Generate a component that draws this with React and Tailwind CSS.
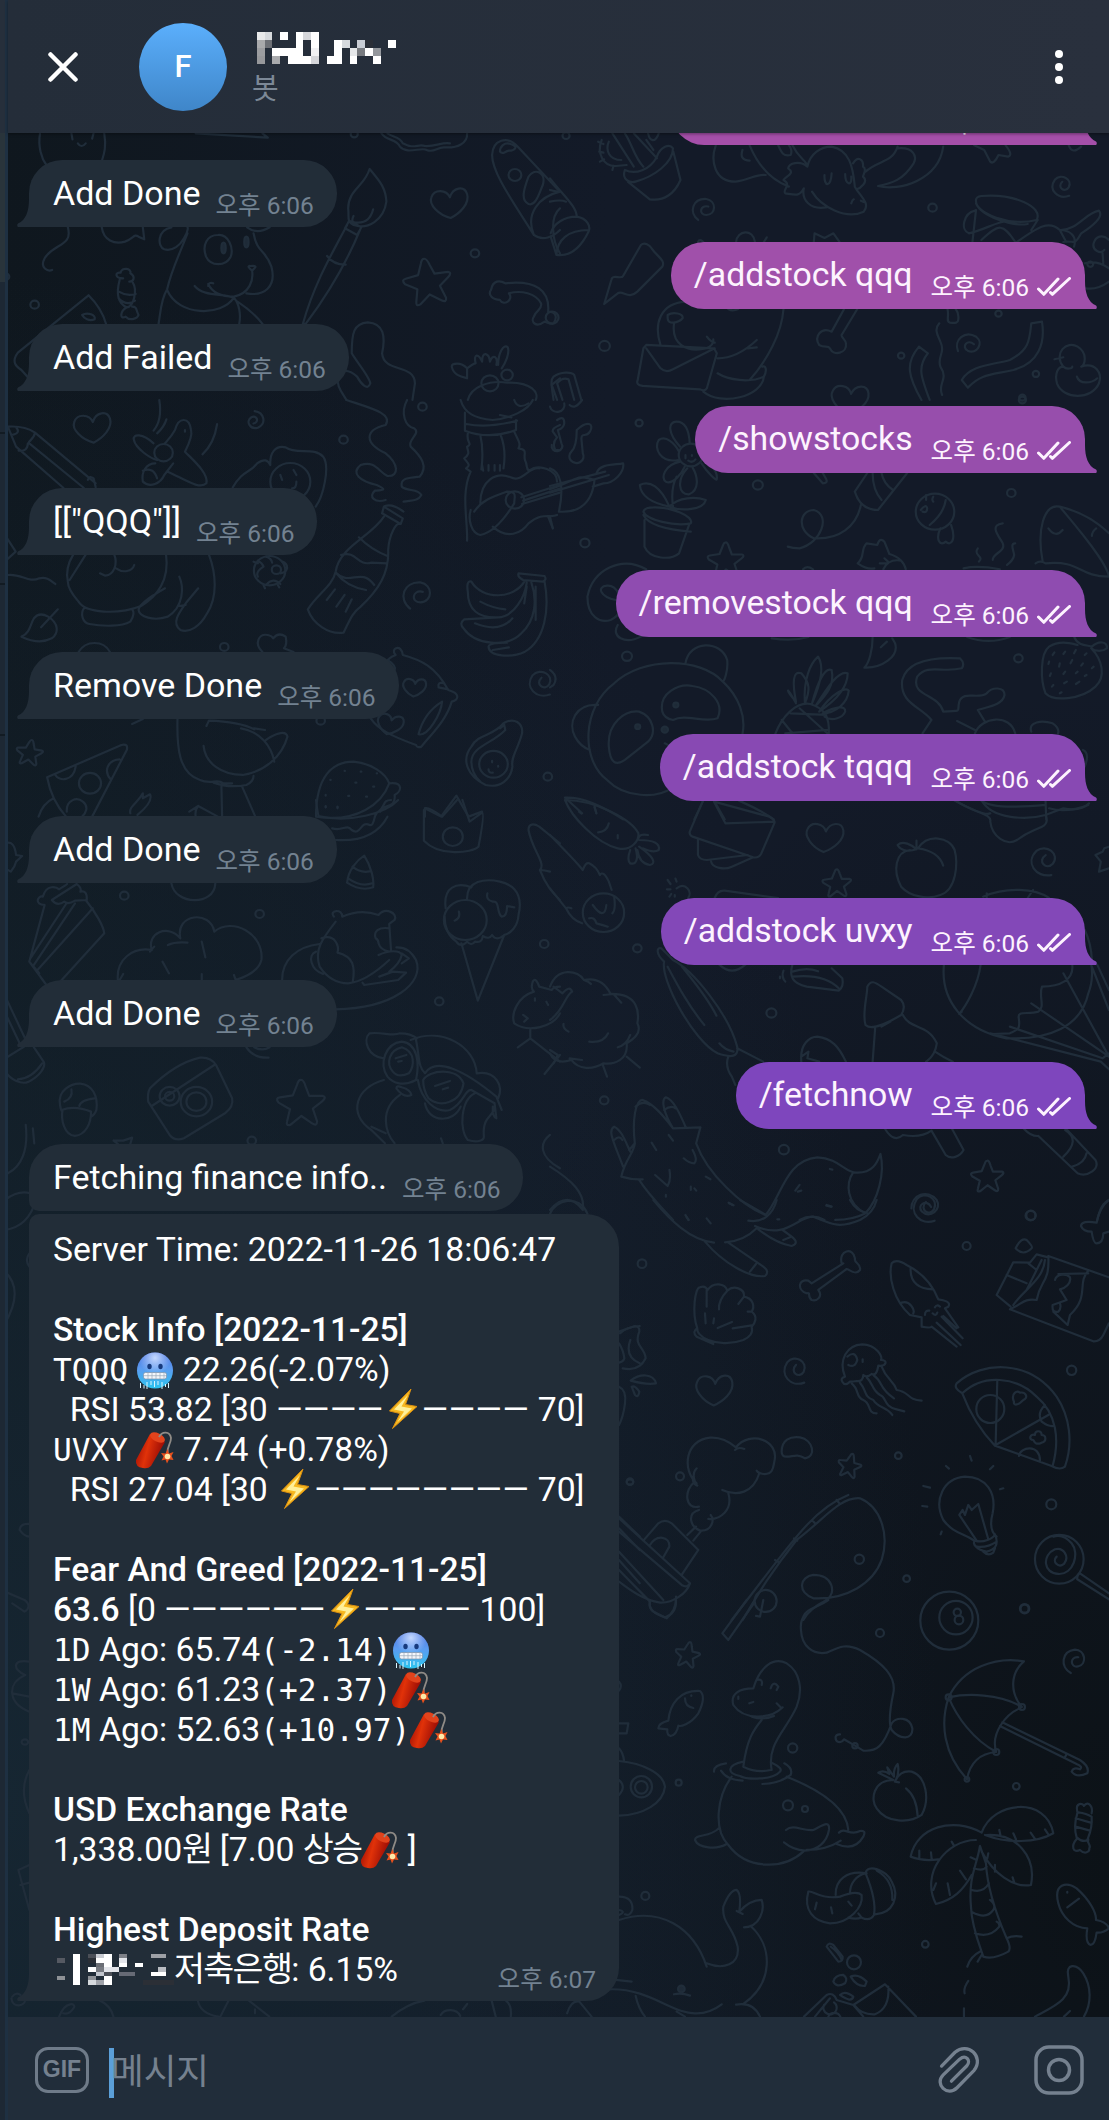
import React from "react";

/* ---------- wallpaper doodles ---------- */

const Star = ({ x, y, s = 1, r = 0 }) => (
  <path
    transform={`translate(${x} ${y}) rotate(${r}) scale(${s})`}
    d="M0 -70Q8 -72 14 -50L24 -22L62 -22Q74 -18 60 -6L34 16L46 54Q46 70 32 60L2 38L-28 64Q-42 70 -38 54L-30 18L-62 -2Q-72 -16 -58 -18L-22 -24L-10 -56Q-6 -70 0 -70Z"
  />
);
const Heart = ({ x, y, s = 1, r = 0 }) => (
  <path
    transform={`translate(${x} ${y}) rotate(${r}) scale(${s})`}
    d="M4 48C-30 38 -58 8 -50 -14C-42 -40 -8 -38 2 -14C10 -44 42 -50 50 -24C58 4 30 34 4 48Z"
  />
);
const Swirl = ({ x, y, s = 1, r = 0 }) => (
  <path
    transform={`translate(${x} ${y}) rotate(${r}) scale(${s})`}
    d="M-4 -14C-26 8 6 32 20 8C36 -24 -8 -50 -32 -22C-58 18 -20 58 22 42"
  />
);
const Dots = ({ at }) => at.map(([x, y, r = 12]) => <circle key={x + "-" + y} cx={x} cy={y} r={r} />);
const Lines = ({ d }) => d.map((p) => <path key={p} d={p} />);

function Wallpaper() {
  return (
    <svg
      viewBox="0 0 1109 2120"
      className="absolute inset-0 h-[2120px] w-[1109px] fill-none stroke-[#202d3a] stroke-[2.200] [&_*]:[vector-effect:non-scaling-stroke]"
      strokeLinecap="round"
      strokeLinejoin="round"
      aria-hidden="true"
    >
      <g transform="scale(.3571 .3333)">
        <Dots at={[[97, 914], [1330, 760], [992, 402, 10], [16, 830, 10]]} />
        <Heart x={1258} y={606} />
        <Star x={1196} y={846} r={-8} />
        <Lines
          d={[
            "M112 400C106 440 116 475 130 495M292 400C298 440 292 460 286 480M200 400L203 418M262 400L258 416M218 430Q228 446 240 430",
            "M548 400L750 413L735 400",
            "M1068 400C1085 425 1110 415 1120 440C1140 465 1180 440 1195 450C1215 460 1225 440 1245 442C1280 445 1310 430 1308 400M1085 400C1100 412 1120 410 1128 430C1160 450 1170 430 1190 438C1220 440 1240 425 1260 430",
            "M1568 575L1450 440C1420 405 1380 420 1378 465C1378 520 1440 610 1495 705C1520 725 1550 710 1568 690M1495 705C1470 640 1510 590 1568 575M1568 625C1540 650 1545 720 1568 760M1400 455C1400 440 1412 425 1430 432C1455 440 1440 452 1425 452C1412 455 1408 465 1400 455ZM1480 530C1500 500 1530 520 1520 555C1510 580 1500 620 1480 612C1455 600 1470 560 1480 530Z",
            "M1035 507C1020 560 975 570 975 625C978 650 970 665 990 675C1030 690 1075 660 1082 605C1080 560 1060 540 1035 507ZM978 662L1012 682L1000 705L966 685ZM972 675C930 760 880 850 848 972L856 972C920 880 970 790 1008 690M916 768Q935 795 968 794M990 648Q980 670 1000 668Q1035 670 1045 628",
            "M190 682C205 740 150 730 125 775C110 805 135 815 146 810M285 682C290 720 320 735 350 725C375 715 375 700 388 710L404 718L400 682",
            "M480 682C440 690 440 740 460 748C485 755 505 735 515 715C530 690 525 680 525 682M525 700C500 770 480 810 468 868C450 900 450 935 444 972M692 682Q720 705 755 682M710 700C720 760 745 750 760 800C775 860 740 890 690 880M468 870C500 950 620 950 655 893C670 910 675 945 670 972M665 905C700 930 720 950 735 972M655 893C620 880 570 890 545 858M583 858Q585 845 597 850M583 852Q600 890 655 890C700 880 710 840 706 812M706 812Q690 798 700 798Q718 796 715 802Z",
            "M610 705C640 702 655 745 646 770C632 800 590 800 577 770C565 735 580 705 610 705Z",
            "M345 835C320 835 322 815 338 818C340 800 370 805 365 820C380 830 375 845 362 845M335 840C325 880 330 910 355 922C375 920 385 870 372 848M333 875Q355 890 380 882M332 895Q355 920 378 902M355 922C335 935 335 960 352 950C365 965 385 955 388 945C380 930 385 920 370 920",
            "M248 886L50 1058C35 1080 38 1095 60 1110L85 1140M248 886C280 920 290 945 297 972M230 945C245 935 270 945 265 958C250 965 235 955 230 945Z",
            "M985 1060C985 1000 990 970 1030 967C1075 970 1080 1010 1070 1060C1075 1120 1160 1090 1162 1150L1155 1200M985 1060C995 1080 1035 1130 1037 1150C1030 1175 1010 1150 1000 1130C980 1110 960 1110 945 1120C940 1160 960 1180 970 1200",
            "M1310 1200C1320 1160 1370 1140 1420 1148C1490 1145 1510 1180 1500 1200M1308 1105C1290 1085 1265 1090 1265 1100C1270 1125 1290 1130 1308 1135V1105C1320 1095 1330 1090 1332 1090C1325 1060 1340 1060 1350 1085C1350 1050 1370 1060 1372 1085C1380 1060 1395 1070 1390 1095M1395 1095C1395 1060 1410 1030 1422 1042C1428 1060 1415 1090 1405 1105M1568 1135L1545 1155L1560 1200",
            "M1375 870C1380 840 1400 840 1415 850C1500 840 1540 870 1535 935C1560 935 1560 955 1550 970C1540 975 1530 965 1525 965C1500 985 1485 965 1495 950C1500 930 1520 930 1515 910C1500 880 1460 870 1425 880C1440 900 1410 920 1400 900C1380 900 1365 885 1375 870Z",
          ]}
        />
        <circle cx="1442" cy="525" r="18" />
        <circle cx="1372" cy="1150" r="24" />
        <circle cx="1420" cy="1125" r="16" />
        <ellipse cx="626" cy="744" rx="6" ry="16" className="fill-[#1e2a37]" />
        <ellipse cx="690" cy="726" rx="6" ry="16" className="fill-[#1e2a37]" />
      </g>

      <g transform="translate(550 0) scale(.3565 .3333)">
        <Dots at={[[45, 407, 10], [1073, 623], [153, 1038, 15], [985, 1067, 9], [1258, 941, 9], [1363, 1122, 9], [6, 953, 18], [1325, 1193, 9]]} />
        <Swirl x={436} y={628} r={60} s={0.8} />
        <Swirl x={1440} y={556} s={0.75} />
        <Swirl x={1178} y={1036} r={90} s={0.8} />
        <Heart x={840} y={1195} r={10} />
        <Lines
          d={[
            "M210 510C200 540 225 550 240 545C290 530 345 490 345 445C335 430 310 440 300 470C280 510 240 525 210 510ZM218 545L280 598C320 605 350 580 366 540L346 455M175 400L235 500M235 400L300 475M210 400C230 430 235 470 262 500M270 420L290 450M275 400C280 425 295 430 305 400M145 420C130 460 150 500 185 498L215 495M165 425C155 450 165 480 200 480M138 455L150 458M140 485L152 478M175 510L178 498M135 425L150 432",
            "M0 535C40 590 75 620 75 650C40 650 10 670 2 700M0 570L20 575M75 650C105 655 115 680 108 695C85 745 55 770 18 765L2 710M18 765C20 720 50 690 108 690M0 605Q30 598 45 605",
            "M465 436C450 480 460 545 520 545C560 540 580 520 605 525M560 436C585 500 620 540 670 560M540 450Q530 480 560 482M640 436C650 460 655 470 675 465C680 455 675 440 670 436M680 436C700 480 720 480 722 500C730 460 760 440 790 440C840 450 850 500 855 560C870 590 900 610 880 635C830 660 760 620 735 575M722 500C700 480 670 490 668 505C690 520 660 530 655 540C680 555 650 570 660 580C690 585 700 590 712 565C705 600 730 630 775 622M770 525C768 560 788 565 790 520M828 522C828 555 848 560 845 530M850 490C865 465 880 480 878 500C890 505 880 520 878 530C895 545 870 565 860 568M845 610Q848 600 852 598M872 602L880 606",
            "M885 515C920 480 960 490 975 440M975 445C1020 440 1030 470 1020 490C990 540 960 550 920 558C980 575 1090 540 1103 440",
            "M1190 436L1218 450L1235 485Q1245 495 1258 465L1285 470Q1300 465 1278 436M1455 436Q1465 465 1490 440",
            "M1195 600C1190 640 1290 680 1365 660C1385 620 1300 580 1210 588Q1195 590 1195 600ZM1195 610C1210 650 1300 680 1340 672M1368 660L1350 690M1195 630L1185 726M1192 632C1160 640 1150 690 1175 700C1220 690 1260 660 1285 665M1210 720C1260 670 1270 670 1305 726M1310 726C1370 680 1400 660 1430 690L1448 726M1432 690C1480 690 1500 640 1540 632C1555 650 1520 680 1490 700C1470 740 1470 720 1440 726M1430 690C1455 690 1480 705 1470 740M1568 720C1550 700 1530 710 1525 730C1520 750 1545 765 1555 750M1550 760L1552 790M1500 790C1540 780 1560 800 1568 805M1503 865C1530 870 1555 855 1568 845M1515 785a8 8 0 1 0 1 0",
            "M255 735C265 725 280 735 285 745C300 770 325 780 315 800L245 875C220 900 205 870 190 880L152 912L172 840C175 820 200 840 205 828Z",
            "M522 726C525 690 570 685 575 726M600 726L608 712M740 726L742 700L770 714L795 700L812 726M415 726Q420 715 430 726",
            "M380 905C310 910 290 970 310 1035M330 945C345 935 375 940 372 955C360 970 330 975 330 955ZM348 970C340 1030 380 1060 440 1045Q460 1035 458 1018M440 1010Q450 1025 462 1028M655 927C650 1000 610 1080 560 1140M470 1075C510 1075 550 1050 580 1020M470 1120C500 1140 560 1150 600 1130C610 1110 605 1095 595 1100M600 1130C595 1190 480 1220 430 1175M555 1045L580 1042M270 1035L460 1045L468 1060L440 1165Q435 1175 420 1168L260 1158Q240 1155 246 1140L262 1045ZM270 1045L310 1105Q325 1120 345 1108L462 1045M500 927Q512 935 528 927",
            "M825 927L790 995C760 980 740 1010 755 1035C770 1045 780 1035 785 1045C795 1070 835 1060 830 1030C830 1020 815 1010 818 1005L862 927",
            "M1115 927C1120 950 1110 965 1122 968Q1145 972 1145 960Q1148 940 1138 927M1092 970C1075 990 1090 1010 1095 1025C1110 1060 1085 1070 1095 1100C1120 1140 1085 1150 1100 1185M1035 1040L1060 1060C1030 1100 1040 1130 1065 1200M1035 1040C995 1090 1005 1130 1042 1200M1350 970L1380 965C1390 1030 1370 1090 1300 1110C1240 1125 1210 1120 1172 1163L1155 1140C1180 1095 1240 1095 1290 1080C1345 1050 1345 1020 1350 970Z",
            "M1440 1100C1410 1060 1450 1020 1480 1040C1510 1060 1500 1095 1490 1100C1530 1085 1550 1120 1540 1150C1520 1200 1440 1200 1422 1150C1415 1120 1425 1100 1440 1100C1450 1110 1465 1105 1465 1100M1415 1078L1440 1072M1478 1130C1485 1155 1520 1150 1535 1135",
            "M10 1200C5 1160 0 1140 10 1130C30 1115 60 1115 68 1125L88 1200M35 1200L20 1150Q35 1130 52 1138L68 1200",
          ]}
        />
      </g>

      <g transform="translate(0 400) scale(.3571 .3333)">
        <Dots at={[[962, 119], [1183, 20], [628, 741], [1534, 1130], [898, 962]]} />
        <Heart x={258} y={80} />
        <Heart x={1160} y={860} s={0.62} r={10} />
        <Heart x={1092} y={970} s={0.7} r={20} />
        <Swirl x={712} y={62} s={0.6} r={-150} />
        <Swirl x={1174} y={586} r={60} />
        <Swirl x={1520} y={846} s={0.9} />
        <Star x={82} y={1058} s={0.55} r={10} />
        <circle cx="813" cy="245" r="56" />
        <circle cx="458" cy="158" r="26" />
        <circle cx="755" cy="512" r="44" />
        <circle cx="774" cy="509" r="13" />
        <circle cx="1442" cy="300" r="26" />
        <circle cx="1382" cy="1093" r="40" />
        <circle cx="252" cy="1150" r="31" />
        <Lines
          d={[
            "M22 80C50 78 80 85 98 98L268 250M22 80L45 140L178 264M98 98C95 120 75 125 82 130L235 264M52 152Q78 155 78 130M45 82Q60 100 32 105M246 240Q250 225 262 235L268 262",
            "M430 130C400 100 370 100 375 120C380 145 420 175 440 180M490 90C500 50 530 50 535 90C540 110 525 140 518 155C540 180 585 220 578 250C560 270 520 240 470 215M490 90C480 110 470 120 462 130M435 190C410 190 395 215 400 245C420 265 450 250 460 225L485 190M400 212Q430 200 440 235M446 0Q455 60 430 92M466 58Q460 80 440 100M608 72Q600 130 567 163M518 90V95",
            "M652 262C680 210 700 220 720 190C740 175 750 180 757 195C755 160 770 135 800 142C830 165 880 140 905 170C925 200 905 290 884 320M785 225L790 240M822 210L830 225M830 245Q830 265 818 265",
            "M970 0C1040 25 1100 40 1080 75C1020 90 1020 130 1080 160C1115 190 1120 230 1085 228C1060 215 1050 180 1010 195C980 220 1010 245 1055 255C1085 270 1075 270 1050 272C1030 290 1050 310 1080 300M1140 0C1120 40 1135 80 1160 85C1180 100 1140 120 1150 140C1180 170 1200 200 1175 230C1150 235 1120 230 1125 260C1140 275 1170 265 1180 285C1170 305 1150 300 1130 305",
            "M1075 320L1128 355L1122 372L1070 340ZM1078 318Q1100 310 1130 335M1075 350C1040 410 950 440 940 515C930 560 890 580 862 628C875 670 920 705 962 698C980 660 985 640 1010 620C1060 570 1090 520 1087 450C1090 400 1110 370 1118 372M1005 412Q1040 450 1085 468M955 465C1000 450 1000 500 1040 488L1083 490M940 518C980 560 1010 500 1048 555M940 518Q970 560 1025 570M938 568L915 600M965 585L942 620M985 598L968 635",
            "M1290 0C1300 40 1330 55 1380 60C1430 55 1480 30 1492 0M1302 38V92Q1370 120 1445 90V60M1305 72Q1370 85 1448 62M1400 45L1432 52M1345 105Q1355 150 1348 208M1403 108Q1418 150 1410 205M1350 195L1353 212M1368 195V212M1385 195V212M1400 195V212M1310 100C1305 130 1325 130 1308 140C1310 155 1318 160 1300 175C1310 190 1320 195 1305 205L1318 215C1290 280 1310 360 1308 422M1440 95C1450 120 1460 130 1452 145C1480 150 1465 160 1470 180C1480 200 1470 205 1482 212C1510 190 1560 210 1560 245",
            "M1345 310C1345 240 1390 215 1430 232C1460 250 1480 200 1510 205M1328 335C1350 300 1380 290 1420 275C1450 275 1440 290 1440 310C1400 380 1370 400 1345 405C1320 400 1310 360 1318 330M1460 292L1568 255M1465 302L1568 266M1462 312L1568 278M1380 380C1420 420 1460 400 1480 370C1520 335 1540 355 1560 345M1535 350L1548 385M1440 0Q1450 30 1480 10M1568 75Q1545 85 1548 95L1560 112Q1545 130 1555 150H1568",
            "M190 545C185 520 190 490 205 464M195 540L240 464M320 464C330 490 320 525 295 527L280 520M325 505C345 520 370 515 376 495M465 464C475 540 440 590 395 618C330 645 240 640 220 605C200 580 190 560 190 545M462 565C430 585 390 610 388 630C390 650 430 665 470 650C515 620 515 560 502 530M235 625C225 640 230 668 250 672C290 680 340 680 365 665Q380 640 370 628M585 464C605 520 610 590 580 640C560 680 530 700 505 690C480 670 500 640 520 610L555 565M500 618L520 615",
            "M22 525C60 520 80 550 110 535C130 530 140 540 155 552M20 478L44 455L20 415M60 710C85 700 85 670 95 655Q110 635 135 650C165 670 165 700 145 715Q110 735 60 710ZM115 682L162 628M220 756C240 720 290 720 308 756",
            "M722 482Q735 490 738 500Q715 515 722 530M745 470Q760 475 762 488M790 485Q805 490 804 505Q800 518 785 520M745 555Q765 530 785 552M738 556L742 565M778 555L782 562M710 485L722 490",
            "M735 756C710 730 725 700 750 705Q762 708 765 715Q780 695 800 710Q805 735 795 745L822 756",
            "M1452 520L1525 528Q1532 540 1520 545L1465 540Q1448 530 1452 520ZM1470 542C1440 600 1350 600 1320 545Q1305 540 1310 575C1310 630 1340 655 1395 652C1440 650 1470 590 1475 548M1395 652L1300 658Q1285 670 1298 685C1330 735 1420 745 1460 700C1500 660 1505 600 1488 548M1525 545C1540 630 1525 720 1470 755C1430 775 1370 770 1368 740Q1370 728 1420 728M1345 605Q1380 625 1415 628M1330 670Q1400 700 1435 655M1380 750L1425 742M1475 560L1468 610M1500 560L1500 660",
            "M1108 765C1090 745 1125 730 1128 765C1180 780 1220 800 1255 870C1290 880 1285 900 1265 905C1250 960 1210 1000 1180 1040Q1168 1045 1165 1035C1100 1010 1060 990 1038 955M1108 765Q1085 775 1085 785M1085 780C1100 790 1110 800 1105 812M1228 862Q1225 845 1242 850M1228 862L1255 868M1238 905C1200 930 1180 970 1172 1003C1200 1010 1235 940 1238 905Z",
            "M1410 970C1440 950 1465 970 1462 1000C1450 1050 1430 1070 1435 1100C1430 1140 1400 1165 1360 1155C1310 1130 1290 1080 1320 1040C1340 1000 1380 1010 1410 970ZM1400 985L1412 975L1415 990C1380 1030 1320 1040 1320 1085Q1320 1120 1345 1145M1378 1083V1087M1395 1098V1100M1368 1108Q1368 1120 1380 1118",
            "M132 1132L340 1035Q360 1030 355 1050L258 1250M132 1132C140 1180 160 1220 185 1250M155 1125C165 1145 205 1145 212 1100M335 1078C300 1080 290 1115 310 1138M187 1235C185 1200 215 1190 232 1205C250 1220 240 1240 230 1250M108 1250Q120 1210 150 1195M365 1240C360 1220 385 1210 400 1180L400 1195L420 1183Q430 1205 385 1245",
            "M497 957C495 1040 500 1120 560 1140C590 1155 610 1135 625 1150H650M570 1038C575 1090 620 1125 680 1125C740 1115 790 1070 805 1010C800 990 770 1000 745 1020M578 978L585 962Q670 965 712 988M675 985C730 995 760 1040 768 1085M712 985L742 990M598 1148Q640 1165 690 1155Q710 1145 710 1128M620 1160L622 1250M678 1160L715 1250M370 972L400 957M530 1235L555 1218L610 1250M555 1218Q545 1230 548 1250",
            "M885 1250C885 1130 930 1085 990 1085C1040 1090 1080 1120 1090 1150C1070 1210 1000 1270 885 1250M1090 1150C1130 1145 1125 1175 1105 1185C1110 1230 1070 1210 1065 1235M965 1113H966M1010 1115H1012M1055 1120H1056M925 1140H926M995 1148H998M1045 1160H1048M975 1188H978M1025 1190H1028M912 1185V1187M945 1222H946M912 1220V1222",
            "M1190 1250V1225L1235 1250L1278 1187L1312 1250L1350 1235",
          ]}
        />
      </g>

      <g transform="translate(550 400) scale(.3565 .3333)">
        <Dots at={[[250, 69, 10], [98, 429, 13], [583, 255, 14], [1294, 279], [216, 769, 14], [1314, 775], [1325, 0, 10]]} />
        <Star x={492} y={480} s={0.75} />
        <circle cx="395" cy="165" r="34" />
        <circle cx="1080" cy="335" r="54" />
        <circle cx="353" cy="915" r="7" className="fill-[#1e2a37]" />
        <circle cx="246" cy="980" r="7" className="fill-[#1e2a37]" />
        <circle cx="322" cy="989" r="9" className="fill-[#1e2a37]" />
        <Lines
          d={[
            "M20 60Q40 45 40 70Q38 85 22 90L32 130A15 15 0 1 1 5 135M75 90C105 60 125 70 112 95C100 115 90 95 88 115L92 160A20 20 0 1 1 60 155Q75 140 75 90M0 20a18 18 0 1 0 40 -10M55 15Q70 30 90 0",
            "M0 205C30 215 40 260 25 335M25 335C100 340 120 290 125 240M125 240C70 220 80 240 0 268M0 278L165 225M0 258L155 215M130 220C140 190 180 195 205 190C210 215 180 250 150 250L120 260M0 350L8 385",
            "M365 140C330 100 330 65 355 65C380 65 390 90 392 130M360 180C310 190 290 145 305 120C325 105 350 130 362 155M365 185C320 195 310 235 325 245C345 255 370 220 378 200M385 205C355 240 360 285 390 283C420 270 415 230 400 203M425 190C440 215 470 250 468 235C470 210 450 195 430 180M380 165V175M398 165V168M388 182Q400 190 408 178M345 320C340 280 345 250 355 230M335 320C290 310 255 290 252 255C280 240 310 260 335 320C360 290 410 290 437 300C430 330 370 335 335 320M262 335C270 360 350 380 395 370C405 350 340 320 290 322Q265 322 262 335ZM262 345Q280 385 395 395M265 360V440C280 480 340 480 362 460L390 375",
            "M872 315C860 380 810 420 740 415C690 390 700 330 740 330C790 345 760 430 700 445Q680 445 667 440M855 275L890 219M855 275C865 310 885 330 920 330L1002 219M905 219Q905 270 930 300M930 219Q935 250 962 270M740 219L765 250Q780 250 775 238L765 219",
            "M1040 330Q1055 310 1058 325Q1058 340 1045 335M1055 285V300M1075 290Q1070 300 1075 305M1110 300Q1105 340 1065 375M1095 385C1080 420 1095 440 1110 425C1125 440 1140 420 1125 375",
            "M863 490C885 470 870 450 888 430L918 435Q925 410 938 425L952 462C980 470 995 490 998 508M938 475L948 485M925 490H945M935 508Q950 475 985 482M863 490Q890 510 910 505M710 508Q720 495 738 508M1160 505Q1200 495 1262 508",
            "M1200 445C1185 465 1220 470 1203 485M1270 370C1230 375 1260 410 1270 430C1280 455 1240 460 1242 480M1305 430C1290 430 1300 450 1302 465Q1300 480 1282 495",
            "M1382 485C1365 390 1385 310 1430 320C1460 360 1560 480 1568 530C1480 530 1490 480 1390 490Q1375 480 1362 490M1430 320Q1510 340 1568 400M1398 385Q1418 415 1438 390M1532 385Q1520 395 1520 408",
            "M270 508C200 465 120 510 105 590C105 650 140 670 170 660Q190 650 195 635M185 600C140 590 130 560 160 557Q180 555 192 580M190 675C170 710 210 735 255 710M622 715Q680 725 725 711M905 711C905 750 895 790 882 803C930 805 980 770 968 730L960 715M928 742L945 725M1170 711Q1230 735 1290 711",
            "M380 790C390 720 480 720 497 780C500 810 490 840 485 845M135 915C70 910 50 970 70 1010Q85 1040 112 1050M485 845C420 770 260 770 180 850C90 920 85 1080 160 1140C210 1195 300 1195 340 1165M485 845C530 890 550 950 540 1002M315 935C305 880 360 850 400 858C450 865 490 910 470 955C430 970 380 940 345 960Q320 955 315 935ZM165 1040C160 970 210 930 250 935C290 950 300 1000 275 1025L210 1080Q170 1110 165 1040ZM322 1030L340 1040",
            "M632 1002C650 950 690 905 730 912C770 925 785 950 782 1002M690 910C660 850 660 870 690 905C680 850 680 810 705 820C730 850 730 870 715 910C710 840 730 790 752 770C770 800 760 850 735 910C750 850 770 800 790 810C800 860 770 890 745 918C780 860 810 810 835 820C835 870 790 910 755 935C790 880 830 860 838 872C835 910 800 940 765 940C800 920 830 915 828 935C820 955 790 965 770 950M650 960L680 1000M675 940L775 945M700 925L780 1002M660 1000L780 990",
            "M1045 1000L1070 960C1040 920 980 910 988 840C1000 790 1060 770 1150 775Q1165 790 1155 805C1100 820 1060 790 1030 830C1010 890 1090 880 1103 935C1160 930 1140 940 1148 905C1160 870 1200 900 1225 880C1240 860 1275 860 1275 885C1270 915 1230 920 1200 930L1220 965M1142 963L1192 990M1192 1000C1210 950 1290 940 1305 1000M1350 995C1340 965 1380 960 1410 970Q1430 985 1425 1000",
            "M1470 710C1480 740 1510 735 1520 740C1540 720 1565 725 1562 745C1550 755 1530 755 1518 745C1550 780 1560 830 1530 860C1490 900 1410 905 1390 880C1375 840 1375 760 1400 740C1430 720 1460 730 1480 735M1415 757L1410 765M1445 755L1440 762M1475 750L1470 760M1505 760L1500 765M1400 785L1398 792M1430 790L1428 800M1465 780L1460 790M1495 790L1490 797M1525 800L1520 805M1405 820L1402 828M1445 815L1440 822M1480 815L1475 820M1505 825L1500 828M1412 855L1408 860M1450 845L1442 850M1485 845L1475 852M1435 877L1430 880",
            "M0 810Q25 830 10 855L0 862M42 1193C90 1190 150 1220 205 1258M42 1193L90 1240M82 1235L88 1240M125 1222L130 1240M405 1258L430 1202M460 1202L490 1258M530 1202Q590 1230 628 1258M1135 1202Q1220 1250 1235 1240M1210 1202Q1240 1230 1390 1215M1390 1202L1392 1258M1400 1225Q1450 1240 1510 1215M1495 1050Q1515 1060 1500 1100",
          ]}
        />
      </g>

      <g transform="translate(0 800) scale(.3571 .3333)">
        <Dots at={[[348, 287], [727, 342], [1524, 432], [1230, 604], [705, 1022]]} />
        <Star x={842} y={910} />
        <circle cx="1268" cy="110" r="28" />
        <circle cx="1303" cy="360" r="60" />
        <circle cx="475" cy="889" r="28" />
        <circle cx="475" cy="889" r="13" />
        <circle cx="550" cy="905" r="44" />
        <circle cx="550" cy="905" r="28" />
        <Lines
          d={[
            "M1190 25Q1200 20 1238 50L1280 0M1295 0L1315 65L1350 38Q1358 40 1340 140C1320 160 1230 170 1187 122V30M1480 90C1480 70 1495 70 1510 80L1568 130M1480 90C1490 150 1530 190 1512 210Q1525 210 1540 215M1512 210C1530 260 1550 280 1568 300",
            "M885 0Q888 30 892 48C980 70 1080 40 1115 0M930 85C960 95 970 70 985 90C1010 110 1010 60 1035 75C1050 80 1045 40 1060 35C1080 20 1070 0 1095 0M940 120C1010 125 1060 100 1085 50M912 18V22M945 20V25",
            "M1020 167C1040 200 1048 240 1045 262Q1010 275 972 248C975 210 1000 180 1020 167ZM987 200Q1010 220 1035 214M975 235Q1010 262 1042 250M480 250C490 315 600 320 603 250M15 130Q40 120 45 165L62 168L45 185Q42 200 30 215L15 205",
            "M125 315C95 315 105 285 120 290C130 250 160 262 165 268Q185 255 188 252M215 252Q230 265 225 275Q245 270 243 300L210 302Q190 315 180 305Q160 320 145 300ZM125 315L82 485L130 555M240 300C270 340 290 380 292 400L160 555M185 312L85 475M210 310L95 495M260 325L105 510M82 485L110 520",
            "M330 540C325 480 370 440 425 450C410 400 470 370 505 415C490 340 590 330 600 395C650 350 740 400 732 480C725 510 690 530 660 540M420 455L432 440M470 435Q490 425 525 428M565 425L575 472M455 485L473 520M335 540L345 522M565 522V540M655 525L660 540",
            "M790 540C790 480 830 440 895 432M940 628C1100 625 1190 550 1165 480Q1145 440 1110 442M935 350C920 330 960 325 958 350Q1010 325 1060 345C1080 320 1115 340 1105 360L1090 372L1095 450M940 365C900 420 880 450 895 500C920 540 950 550 975 550C1020 545 1060 510 1090 480M900 415C940 400 950 440 945 458C990 470 995 500 988 545M885 455C860 465 870 510 905 522M1090 385C1060 380 1045 395 1052 415Q1060 420 1060 430Q1065 450 1090 455M1060 465C1090 450 1120 450 1125 465Q1120 490 1090 515M1125 460L1145 475L1125 490M1062 530L1100 515L1137 518L1115 540L1020 555L1015 548",
            "M1248 325C1240 260 1280 245 1320 262M1308 300C1305 240 1360 235 1400 245C1460 260 1460 310 1452 345C1450 380 1430 400 1412 405Q1390 425 1378 405Q1370 420 1352 408Q1350 430 1330 425Q1320 440 1308 425Q1290 445 1278 425Q1245 400 1245 350M1365 280Q1360 300 1380 305C1400 300 1390 340 1405 350Q1420 350 1420 318L1440 322M1285 335Q1290 355 1273 362M1292 430L1338 602L1412 405",
            "M15 590L70 715M15 640L55 730M15 775L90 725M15 815C30 840 60 855 80 845C110 830 130 800 122 785L95 742M50 838Q90 835 118 790",
            "M168 915C160 870 200 850 225 851C260 855 275 890 270 930Q265 945 255 950M168 915Q170 930 175 935M172 930Q210 915 255 935C255 970 240 1005 210 1008C180 1005 170 960 175 930M180 905Q205 895 200 868M222 918Q225 900 265 895",
            "M420 865Q490 790 560 773Q590 770 605 795L650 895Q655 920 630 940L515 1015Q490 1025 475 1005L415 905Q412 880 420 865ZM425 918L600 795",
            "M1075 775C1030 770 1015 720 1035 700C1070 695 1100 710 1120 700Q1150 700 1168 715M1150 720C1240 680 1330 740 1335 820M1335 820C1390 810 1410 860 1395 895M1085 830C1060 790 1080 730 1125 725C1170 730 1175 790 1165 840C1130 860 1100 850 1085 830ZM1100 815C1080 790 1090 750 1125 742C1165 755 1160 800 1145 820Q1115 835 1100 815ZM1108 775L1138 765M1115 785L1125 783M1165 720C1175 770 1170 800 1190 820C1220 770 1300 810 1390 890L1405 930M1185 840C1200 810 1280 800 1298 850C1290 910 1230 925 1200 895Q1185 870 1185 840ZM1218 858L1260 843M1240 868L1255 863M1190 910C1200 970 1270 970 1290 920M1170 840C1180 900 1220 940 1260 930C1300 910 1300 870 1320 870L1385 910L1390 955Q1378 950 1380 920M1075 840C1000 860 970 940 1040 990L1078 1030M1110 865Q1110 855 1125 862Q1150 870 1152 885Q1130 895 1110 865ZM1120 885C1060 930 1080 1000 1105 1030M1040 980L1080 1000M1330 880C1290 900 1285 990 1310 1020C1340 1030 1355 1020 1355 1010C1350 950 1380 950 1385 925M1235 1015L1240 1030",
            "M1568 560Q1550 560 1545 570L1510 560Q1500 530 1492 545Q1485 565 1495 575C1450 590 1430 640 1440 670C1480 700 1550 680 1568 640M1498 595V602M1530 605L1535 615M1465 645L1478 655M1468 665L1478 655M1485 685V715L1450 742M1485 715L1568 785M1568 765L1525 822",
            "M690 742Q710 775 752 773M712 742Q735 755 755 742M72 975C80 1050 60 1100 22 1120M92 985L96 1030M318 1022L330 1032M318 1022L345 1022L370 1013L365 1032M1540 1005C1510 1030 1510 1070 1568 1105M15 1200Q50 1170 85 1180",
          ]}
        />
      </g>

      <g transform="translate(550 800) scale(.3565 .3333)">
        <Dots at={[[245, 445], [152, 901], [621, 639, 14], [656, 1049, 14], [1348, 1247, 14]]} />
        <Heart x={770} y={108} r={8} />
        <Star x={804} y={250} s={0.6} />
        <Star x={1226} y={1130} s={0.68} />
        <Swirl x={1392} y={180} r={10} />
        <Swirl x={1056} y={1220} r={110} s={0.9} />
        <circle cx="150" cy="338" r="58" />
        <Lines
          d={[
            "M42 0C60 50 130 130 190 145C230 155 250 120 248 100C230 60 130 0 42 0M82 35L88 40M125 20L130 40M165 70Q160 95 135 97M190 105V115M248 115Q250 100 275 105M250 120C290 120 310 130 305 150Q290 160 260 145M250 140C290 170 300 190 280 195Q250 190 245 150M240 145C250 180 240 195 225 190Q215 180 225 150",
            "M0 105C40 150 70 180 92 210Q100 185 110 190Q130 200 140 225Q150 210 165 245L173 270M0 265L45 325Q50 320 60 325M45 325Q60 360 90 370M120 315C140 345 155 350 158 315M180 290Q185 330 175 340M110 355Q125 350 130 370Q150 375 162 380M328 268L338 268M330 240L338 252M352 236L355 245M335 290L340 282M350 290V285M355 265C380 245 400 275 388 294M462 294Q470 270 490 272L640 294",
            "M428 5L392 95Q390 105 400 110L570 172Q585 175 592 162L630 68Q630 58 615 50L460 5M460 5L492 70L630 65M415 115V165Q420 180 440 180L555 165M452 185C455 205 490 210 510 200L570 172",
            "M1010 150C970 155 960 210 985 260C1010 290 1060 300 1095 285C1140 270 1145 190 1135 150C1120 110 1060 100 1032 145C1070 150 1095 170 1103 197M975 135C990 120 1015 135 1028 148C1010 155 985 155 975 135ZM1028 148V122",
            "M1135 0C1190 40 1240 40 1235 65C1240 110 1280 140 1310 120C1340 95 1350 95 1380 80Q1400 70 1390 45C1340 60 1240 60 1210 0M1390 45L1440 25Q1490 35 1512 10M1568 140L1555 145L1550 155L1530 165L1545 185L1540 215L1568 205",
            "M312 445C300 440 295 460 320 485C310 540 400 720 470 760C510 775 530 770 525 740C500 640 400 510 345 480L312 445M330 500C360 560 390 620 433 675M370 500C400 540 440 590 467 647M500 770Q490 800 510 830L520 855M525 745L598 785M475 730Q490 750 515 755M475 494Q510 530 548 494",
            "M0 560C20 500 80 510 95 540C140 530 160 560 170 582C250 580 250 640 245 670C260 700 230 720 215 730C220 780 180 795 150 790C120 810 80 810 60 780C30 790 10 785 0 760M0 660C40 630 40 590 62 575Q55 555 35 580L10 560M38 672Q35 685 52 695M110 725Q150 730 163 700M95 540Q110 545 115 552M150 585L178 582L200 608M225 705Q215 735 190 742M215 770L252 803M148 795L160 830M0 750L22 765L10 790M55 775L90 780",
            "M680 494C670 530 680 550 720 560L810 572Q825 560 820 535L790 505M680 515Q720 500 752 514M680 530Q770 520 810 565M655 512Q648 530 660 545M645 530V535",
            "M890 560C900 540 910 545 930 560L985 600Q1000 620 985 645C930 680 900 690 885 675C875 640 890 590 890 560ZM912 685L905 785M930 680L955 665M990 645C1010 690 1060 670 1085 730C1080 770 1060 780 1055 785M1080 755Q1100 770 1130 785M705 785C700 730 730 710 750 710C790 715 810 740 830 785M705 770L725 755L722 775L755 785",
            "M1105 494C1095 600 1160 690 1280 715C1400 720 1490 680 1510 580C1525 540 1520 500 1518 494M1208 494C1200 560 1165 620 1148 642L1155 635M1225 294V280M1215 290C1280 260 1360 265 1400 294M1340 294L1355 270M1465 494C1470 540 1430 560 1380 560C1370 590 1390 620 1370 635C1340 645 1310 630 1315 655C1320 690 1310 690 1290 700L1240 702M1500 390Q1518 430 1520 480M1520 500L1568 630M1440 520L1568 770M1350 610L1568 770M1290 680L1550 775L1568 760M1235 700L1545 785L1568 808M1535 494L1568 570",
            "M200 1130C210 1080 235 1060 238 1030C230 960 240 900 260 900C290 910 320 950 345 985L422 982L410 1030C440 1120 540 1220 605 1245M238 1030L222 1050M205 1100C180 1030 160 990 180 980C200 990 210 1020 225 1055M240 920Q260 900 280 915M345 985C320 940 310 900 325 892C345 900 360 930 380 980M320 930Q340 915 352 925M180 1020Q195 1005 203 1020M285 1028L298 1050M333 1005L345 1022M400 1050Q415 1080 405 1090Q390 1090 375 1075M295 1125L330 1158Q340 1140 335 1110M200 1130Q230 1140 260 1138M250 1140C280 1190 320 1230 345 1260M437 1130L450 1138M395 1160V1170M405 1165L410 1172M325 1185V1190M502 1210L515 1216M380 1245L388 1260",
            "M605 1245C650 1190 660 1080 750 1072C810 1075 830 1120 860 1118C910 1120 920 1080 927 1062C940 1120 920 1200 885 1240C850 1260 820 1260 800 1260M850 1118C830 1150 830 1210 885 1240M785 1107L792 1109M688 1172L700 1155M695 1175L705 1172M775 1217L788 1220M700 1260Q735 1240 770 1260",
            "M940 987Q965 1030 990 1005Q1040 1015 1070 992L1110 1065C1125 1080 1150 1070 1160 1050L1128 987M1330 987Q1350 1010 1370 1008L1480 1120Q1500 1130 1520 1115Q1540 1100 1530 1080L1448 987M1445 990Q1490 1020 1440 1070M1505 1060Q1500 1090 1465 1100M0 1100C60 1140 100 1180 92 1230Q50 1170 0 1230M1568 1200Q1545 1210 1535 1260",
          ]}
        />
      </g>

      <g transform="translate(600 1200) scale(.3333)">
        <Dots at={[[126, 191, 13], [1293, 46, 14], [1100, 138], [1415, 511, 14], [895, 767, 10], [240, 829], [90, 845, 10], [1354, 913, 15], [778, 1078, 14], [920, 1136, 10], [1274, 1226]]} />
        <Swirl x={592} y={508} s={0.95} />
        <Swirl x={982} y={20} />
        <Heart x={342} y={566} r={6} s={1.05} />
        <Star x={748} y={797} s={0.52} r={15} />
        <circle cx="1171" cy="627" r="42" />
        <circle cx="1378" cy="1078" r="73" />
        <circle cx="497" cy="1203" r="33" />
        <Lines
          d={[
            "M160 0C210 60 270 120 342 128M315 125C370 190 450 235 495 228Q510 215 490 200L385 128M375 127Q430 125 470 85M420 0L498 45M530 0C520 40 490 70 445 62M465 78C560 120 590 50 640 50C700 75 720 85 780 60C810 45 825 20 830 0M750 0Q770 35 800 38M475 88Q530 130 575 138Q600 130 575 110L548 90M450 215L468 192M550 120L570 112M257 47L266 60M320 55L332 70M386 8L398 15M680 15L695 20M532 58H538",
            "M725 190C715 150 760 140 765 175C760 190 785 190 780 210C765 230 745 205 740 207L655 270C670 290 650 305 635 300C620 290 635 275 620 280C590 270 595 235 625 242L635 250L730 190",
            "M292 385C275 340 285 260 300 262Q315 255 323 270C340 245 375 250 382 272C400 255 435 265 432 290C460 295 465 320 455 335C475 350 465 370 455 380C460 400 450 410 430 420C390 435 350 430 325 420C300 410 290 395 292 385Q275 395 290 410L340 432M320 270V320M382 272Q355 300 357 328M432 290L415 312M455 335H443M315 340L317 370M342 355L340 370M353 384L396 366M398 385L455 376",
            "M875 190C865 230 880 300 930 345L965 352V380Q990 385 995 380L1070 440M875 190Q890 175 920 195C970 220 1000 260 1015 298C1030 300 1055 305 1045 320L1035 325L1075 382M932 205C930 250 960 268 998 268M905 308C930 300 945 330 940 340M975 345Q975 330 988 332M1005 322Q1010 312 1020 320M998 340Q1008 350 1012 338M1010 368L1082 435M1025 350L1088 415M1030 348L1070 385",
            "M735 530C715 480 740 435 787 433C830 435 850 470 843 480C865 480 860 500 835 497Q830 530 815 522Q800 535 790 525Q790 545 770 543Q760 545 750 545Q735 560 727 545Q720 535 735 530M742 470Q765 450 772 480Q765 505 745 495M788 478V486M755 550C780 570 765 590 790 600C815 610 800 640 830 640M780 548C800 570 790 590 820 600C835 625 860 620 877 645M800 532C820 550 815 570 840 585C860 590 850 620 890 628L913 634M820 525C850 545 835 565 882 595M845 500C860 540 880 540 890 570C930 575 920 600 965 602",
            "M1240 187L1190 285L1232 320M1240 187L1290 188L1310 163L1345 172M1310 210L1285 190M1220 225L1280 250M1325 180L1280 270M1345 168L1527 232M1230 328L1480 424Q1500 425 1510 405L1527 370M1345 168C1350 250 1320 240 1310 300C1270 295 1270 310 1230 328M1335 180C1330 240 1270 270 1240 315M1365 240C1370 220 1400 220 1410 232C1415 250 1395 265 1380 268L1400 300L1358 315Q1355 340 1375 335Q1385 325 1380 310M1375 222L1465 220M1465 212C1430 250 1470 290 1410 345L1403 375L1360 335M1247 145Q1265 110 1280 120Q1300 140 1295 145Q1270 170 1247 145ZM1527 0Q1500 20 1490 68Q1445 60 1443 78Q1450 95 1475 95Q1480 130 1490 130Q1510 130 1510 100L1527 95",
            "M1070 550C1150 480 1290 480 1370 590C1410 650 1420 730 1395 800Q1380 812 1355 798L1185 737C1140 690 1110 640 1087 580Q1060 565 1070 550ZM1087 580C1150 520 1250 530 1310 590C1370 640 1380 720 1358 798M1192 540L1187 735L1345 645M1335 615Q1310 640 1325 665Q1345 680 1360 678M1257 768C1260 740 1320 730 1320 782M1240 600C1235 580 1250 570 1260 578C1280 575 1285 595 1270 600C1250 620 1240 615 1242 605ZM1300 720C1285 720 1290 700 1305 705C1305 690 1325 690 1325 705C1340 705 1340 725 1325 728C1310 735 1305 730 1300 720Z",
            "M57 395Q85 385 105 378Q120 380 118 395C100 440 135 440 137 475C120 510 90 510 68 505M57 430Q70 450 73 475Q70 485 57 488M92 542C120 520 160 520 168 550Q140 555 92 542ZM95 560Q105 555 118 575Q115 595 105 585ZM57 560Q80 570 75 610Q70 650 57 675",
            "M290 850C245 810 255 720 330 713Q370 710 408 742C450 690 540 720 523 785C520 800 520 825 490 822Q475 820 470 812M478 820C460 880 410 890 367 870M385 880C400 930 360 960 325 957M280 830Q275 850 292 857M290 805Q275 820 285 845C250 870 255 930 297 920M297 930C260 940 270 980 300 992C335 995 345 960 332 945M405 750Q415 740 433 747",
            "M545 755C545 720 570 708 600 712C640 720 650 770 615 775C590 760 580 770 560 770Q545 770 545 755Z",
            "M57 955L270 1150C260 1180 220 1210 180 1208C130 1200 90 1170 57 1145M57 995L245 1155Q262 1165 270 1150M57 1055L190 1200M57 1110L150 1205M130 1022L175 970Q195 955 215 970L295 1050L245 1125M148 1038C170 1000 210 1010 208 1040L190 1072M262 1005L288 980M280 1022L302 995M150 1210Q145 1230 170 1240L200 1255Q230 1230 228 1190",
            "M745 885C630 930 560 1050 395 1260M780 895C720 890 670 960 590 1020C510 1120 470 1190 428 1260M780 895C840 920 870 1000 845 1080C820 1150 740 1200 640 1195C590 1175 600 1130 640 1125C700 1125 710 1180 680 1200C640 1220 620 1240 610 1260M710 900L718 910M636 960L645 970M582 1015L592 1022M525 1080L538 1088M490 1200L480 1250L468 1248",
            "M1120 1020C1090 1000 1060 1000 1030 960C1000 900 1030 835 1095 830C1160 830 1190 880 1178 940Q1165 990 1190 1010M1130 1022L1078 945L1088 930L1095 945L1105 915L1115 930L1135 912L1165 1018M1125 1022C1150 1030 1180 1015 1185 1003C1200 1040 1180 1050 1160 1055C1130 1050 1115 1030 1125 1022ZM1130 1040Q1160 1045 1190 1025M1150 1055Q1165 1070 1180 1058L1185 1045M970 858L990 863M967 918L982 920M1038 798L1047 806M1110 768L1115 782M1180 798L1170 808M1210 865L1200 868M1025 995L1022 1003",
            "M1370 1070C1355 1085 1375 1105 1392 1092C1410 1070 1390 1040 1365 1048C1325 1065 1330 1120 1375 1122C1420 1125 1440 1060 1415 1030Q1390 1000 1360 1010M1440 1120L1527 1180M1432 1138L1527 1198M1440 1120Q1430 1125 1432 1138",
          ]}
        />
        <circle cx="1048" cy="1262" r="87" />
        <circle cx="1068" cy="1253" r="50" />
        <circle cx="1072" cy="1237" r="11" />
        <circle cx="1077" cy="1260" r="13" />
      </g>

      <g transform="translate(600 1600) scale(.3333)">
        <Dots at={[[1274, 26, 14], [840, 99], [578, 444, 14], [236, 548, 9], [1249, 559, 10], [976, 1033, 10], [136, 888], [564, 616, 15], [615, 627, 9], [762, 1087, 21], [1046, 292, 9], [1266, 321, 9], [1189, 456, 9], [1101, 538, 7], [765, 437, 8]]} />
        <Star x={262} y={164} s={0.55} r={12} />
        <Swirl x={1428} y={182} s={0.85} r={50} />
        <circle cx="124" cy="560" r="32" />
        <circle cx="124" cy="562" r="19" />
        <circle cx="244" cy="1167" r="10" className="fill-[#1e2a37]" />
        <Lines
          d={[
            "M440 0L367 100L385 120L460 12M150 0Q140 35 195 52Q230 40 228 0M610 50C620 25 650 25 685 0M603 90Q600 60 615 45M603 90C605 140 640 165 680 158C720 140 740 130 780 150C850 190 890 230 880 280C865 350 870 380 875 390C900 420 940 420 937 385C930 350 890 350 875 370C850 440 830 455 790 452L765 437L732 418C725 430 705 430 707 410Q710 402 720 403",
            "M205 362C210 310 240 270 300 273Q320 290 295 340C270 375 240 380 235 377M205 362Q175 370 175 385L202 388Q200 405 212 408Q230 405 235 377M255 295Q255 320 280 324M274 286V288",
            "M460 265C480 200 520 170 560 190C600 215 610 270 590 320C560 390 500 430 515 510M460 265C420 265 390 280 400 315C430 360 510 360 548 322M485 360C460 390 440 420 430 500Q470 520 512 510M470 240Q490 235 485 255M512 265Q520 240 535 260L530 270M415 290V297M448 310L460 306M530 310L545 325M455 350Q490 362 522 348M430 485C380 495 380 520 420 528C440 540 520 540 540 515Q550 505 515 488M378 490Q340 495 342 515M363 512Q380 540 428 542M553 490Q580 505 572 525Q540 550 487 552M395 530C350 590 340 690 385 735C440 810 550 810 610 755M560 530C660 570 740 620 745 690M358 683C330 715 285 700 285 720C295 745 350 750 380 732M558 690C580 670 610 695 640 690C670 675 690 660 687 690C680 730 650 750 615 752Q580 750 552 727M717 698C735 680 750 710 780 693Q800 690 790 710C770 745 740 745 710 732M620 750Q680 750 722 722",
            "M57 483C130 490 190 520 195 560C190 610 130 645 57 647M57 445Q70 460 72 482M57 370H85L80 400H57M57 540Q80 560 57 585M57 245Q68 258 57 272",
            "M880 540C820 540 810 600 830 625C860 670 930 670 965 645C990 600 980 530 935 515Q900 510 885 545M880 540L835 518Q850 508 868 522L862 502L882 530Q880 505 893 492Q900 520 885 545L897 547M918 565Q950 590 953 648",
            "M1046 292C1090 200 1190 170 1272 184C1230 220 1230 280 1266 321C1200 280 1100 280 1046 292C1020 370 1030 460 1101 538C1110 490 1140 460 1189 456C1120 420 1070 350 1046 292M1189 456C1170 400 1220 340 1262 324M1207 367L1440 480Q1470 500 1462 520Q1430 535 1415 515Q1420 500 1440 508Q1450 500 1430 492L1200 378M1400 462L1395 472",
            "M1145 698C1060 650 950 680 932 770Q970 785 1015 778M1145 698C1180 600 1340 590 1360 700C1310 730 1220 730 1155 705M1128 720C1040 720 960 820 1008 912C1060 900 1090 870 1115 825M1160 705C1250 700 1310 770 1293 855C1240 865 1180 820 1145 755M1140 738C1130 800 1105 830 1113 920C1115 980 1140 1040 1150 1070Q1180 1080 1225 1055Q1235 1045 1220 1015C1170 900 1160 830 1158 790ZM1122 805Q1150 815 1160 800M1115 870Q1150 880 1167 850M1117 937Q1160 960 1180 930Q1190 915 1170 900M1125 1000Q1170 1015 1198 980Q1200 970 1190 965M958 752V775M993 757L995 777M1055 725L1062 737M1043 850L1050 885M1000 870L1008 850M1080 812L1098 838M1198 690L1202 708M1240 700L1248 718M1292 698L1305 717M1335 688L1345 703M1185 795V815M1238 832L1243 848M1165 760L1162 775M1112 772L1130 780M1220 1015Q1240 1005 1265 1010M1143 1053Q1110 1070 1102 1100M1105 1143Q1090 1165 1094 1180M1092 1225V1250M1145 1065L1133 1085",
            "M1432 635C1425 605 1450 610 1452 618C1465 600 1480 620 1475 640M1435 637Q1460 640 1475 650C1478 690 1465 710 1462 720M1432 640Q1420 680 1430 712Q1450 730 1465 718M1427 655L1472 668M1427 680L1470 692M1432 715C1410 740 1420 760 1440 750C1455 765 1470 755 1468 745C1475 735 1460 730 1465 720",
            "M1375 910C1360 850 1400 845 1430 865C1470 900 1490 940 1488 960Q1520 965 1527 985Q1510 1000 1490 998Q1485 1035 1472 1035Q1455 1030 1462 985C1420 985 1385 950 1375 910ZM1402 922L1437 896M1402 876V878",
            "M625 875C640 870 660 900 720 890Q770 870 785 885C790 920 750 970 690 970C640 965 610 930 625 875ZM650 908L645 928M693 922L697 940M745 905L755 917M707 885C705 840 740 810 800 820M750 880C750 850 770 825 797 820M797 820C800 790 860 810 875 845C900 890 880 940 825 943M797 820Q830 900 822 945Q810 965 785 953L775 940M830 812Q880 840 877 900M745 953Q770 960 785 952",
            "M57 960C180 920 280 980 320 1100M57 945Q80 935 57 930M57 890Q100 890 97 930Q90 950 75 943M320 1090C370 1110 420 1095 413 1040C400 980 365 970 370 920Q390 870 410 870Q425 880 418 935Q450 900 485 900C495 930 480 980 432 982M452 978C520 1040 520 1150 430 1212M410 933L428 942M47 1140L95 1145M30 1168C150 1165 220 1245 290 1240Q330 1240 365 1213M107 1188Q115 1225 135 1250M230 1235L255 1250M408 1214Q460 1205 480 1250M222 1183Q245 1178 270 1187",
            "M680 1040Q685 1025 700 1035L728 1070Q730 1085 715 1085ZM692 1040Q715 1055 725 1080M700 1145Q705 1125 730 1125Q745 1135 735 1150Q710 1165 700 1145ZM752 1130Q775 1120 800 1145L795 1158Q770 1160 752 1130ZM720 1185Q735 1170 760 1190Q755 1210 720 1185ZM612 1250L680 1185Q700 1175 710 1200L760 1215L855 1153L948 1250M645 1250L690 1195M765 1218Q785 1245 825 1243Q870 1225 865 1160M760 1215L790 1250M672 1215a20 20 0 1 0 30 -8M685 1250a20 20 0 0 1 36 0",
            "M1305 1250C1360 1220 1420 1200 1405 1130C1395 1090 1430 1090 1450 1120C1475 1160 1475 1210 1452 1250M1410 1233L1392 1250",
          ]}
        />
      </g>

      <g transform="translate(0 1200) scale(.408 .3333)">
        <Lines
          d={[
            "M12 90Q70 80 88 0M12 215Q60 270 12 370M72 160Q60 180 72 200M48 990Q50 970 72 972M48 990Q60 1010 72 1010M12 1175L60 1200Q80 1220 60 1235L30 1210",
            "M1348 42C1360 0 1420 -20 1440 42M1520 400Q1535 380 1568 378M1545 420Q1530 470 1568 490M1517 950L1568 1010M1517 985L1568 1050M1517 1080L1568 1150",
          ]}
        />
        <Dots at={[[1544, 846, 8]]} />
      </g>
      <g transform="translate(0 1600) scale(.408 .3333)">
        <Lines
          d={[
            "M72 185C30 175 30 210 62 225C15 250 20 310 72 335M30 280L72 290M72 510Q45 570 72 640M72 795L45 810L55 855L72 930M50 855L72 848M30 1190Q40 1175 50 1185M28 1195C30 1225 60 1220 62 1200",
            "M145 1250C160 1200 190 1210 180 1225Q170 1245 155 1240M245 1202Q270 1215 278 1250M485 1202Q490 1240 535 1250M540 1250L560 1202M610 1202L660 1250M625 1228V1240M960 1250Q1000 1210 1040 1202M1080 1245C1090 1225 1120 1225 1128 1248M1135 1228L1145 1212M1205 1202L1215 1250M1240 1202Q1255 1215 1252 1250M1390 1240Q1400 1200 1420 1205L1450 1250",
          ]}
        />
        <Dots at={[[61, 426, 8]]} />
      </g>
    </svg>
  );
}

/* ---------- emoji and icons ---------- */

const EMOJI = "inline-block h-10 w-[38px] overflow-visible align-top";

const Cold = () => (
  <svg viewBox="0 -1 38 40" className={EMOJI} role="img" aria-label="cold face">
    <defs>
      <linearGradient id="cold" x1="0" y1="0" x2="0" y2="1">
        <stop offset="0" stopColor="#4b73df" />
        <stop offset=".45" stopColor="#5c9bf0" />
        <stop offset="1" stopColor="#2cc4ef" />
      </linearGradient>
      <radialGradient id="coldShine" cx=".5" cy=".15" r=".45">
        <stop offset="0" stopColor="#c3d8ff" />
        <stop offset="1" stopColor="#c3d8ff" stopOpacity="0" />
      </radialGradient>
    </defs>
    <circle cx="19" cy="19.5" r="18" fill="url(#cold)" />
    <circle cx="19" cy="19.5" r="18" fill="url(#coldShine)" />
    <ellipse cx="13.5" cy="15.5" rx="2.2" ry="2.8" fill="#173a7d" />
    <ellipse cx="24.5" cy="15.5" rx="2.2" ry="2.8" fill="#173a7d" />
    <rect x="7.500" y="21.500" width="23" height="6.500" rx="2" fill="#f4f6fa" stroke="#7b8fa8" strokeWidth=".7" />
    <path d="M8 24.700H30M12 21.500V28M16 21.500V28M20 21.500V28M24 21.500V28M28 21.500V28" stroke="#9aa9ba" strokeWidth=".7" />
    <path d="M4.500 32V37M8 34V37.500M11 31V38M15 30V34M18.500 30V36M22 30V34M26 31V38M29.500 33V36M32.500 32V37" stroke="#d8f6ff" strokeWidth="1" />
  </svg>
);
const Cracker = () => (
  <svg viewBox="0 -1 38 40" className={EMOJI} role="img" aria-label="firecracker">
    <defs>
      <linearGradient id="crk" x1="0" y1=".3" x2="1" y2=".6">
        <stop offset="0" stopColor="#9c0d05" />
        <stop offset=".4" stopColor="#e13209" />
        <stop offset="1" stopColor="#8c0505" />
      </linearGradient>
    </defs>
    <path d="M14 3L0 29Q-1 36 7 37Q12 38 15 35L29 11Z" fill="url(#crk)" />
    <ellipse cx="21.5" cy="6.500" rx="8" ry="4.200" transform="rotate(26 21.500 6.500)" fill="#e2431c" />
    <path d="M23 6C26 0 34 0 35 7C35 13 31 15 31.500 22" fill="none" stroke="#8f8b86" strokeWidth="1.800" />
    <path d="M31.500 18L33 22.500L37.500 21L35.500 25L37.500 29L33 28.500L31 32.500L29.500 28.500L25.500 29.500L27.500 25.500L25 22L29.500 22.500Z" fill="#e8501c" />
    <circle cx="31.500" cy="25.500" r="2.800" fill="#ffe9a8" />
  </svg>
);
const Bolt = () => (
  <svg viewBox="0 -3 38 40" className={EMOJI} role="img" aria-label="high voltage">
    <path d="M27 -4L5.500 18L16 20.500L8.500 35.500L33 13.500L21.500 11.500Z" fill="#f7b81f" stroke="#d98e12" strokeWidth="1" />
    <path d="M24 2L10 16.500L20 18.500L13.500 29L28 15.500L17.500 13.500Z" fill="#fff09a" />
  </svg>
);

const Checks = () => (
  <svg viewBox="0 0 34 19" className="ml-2 h-[19px] w-[34px] fill-none stroke-[#fdf3fe] stroke-3" strokeLinecap="round" strokeLinejoin="round" aria-hidden="true">
    <path d="M1.500 12L6.800 17.300L21 2" />
    <path d="M13.500 15.500L15.300 17.300L32.500 1.500" />
  </svg>
);

const Mosaic = ({ cells, w, h, className }) => (
  <svg viewBox={`0 0 ${w} ${h}`} className={className} preserveAspectRatio="none" shapeRendering="crispEdges" aria-hidden="true">
    {cells.map(([x, y, cw, ch, c]) => (
      <rect key={x + "," + y} x={x} y={y} width={cw} height={ch} fill={c} />
    ))}
  </svg>
);

const NAME_CELLS = [
  [0, 0, 1, 1, "#e9eaeb"], [1, 0, 1, 1, "#d6d9dd"], [3, 0, 1, 1, "#fff"], [5, 0, 1, 1, "#fff"], [6, 0, 1, 1, "#d6d7db"], [7, 0, 1, 1, "#fff"],
  [0, 1, 1, 1, "#a9aaac"], [1, 1, 1, 1, "#6d7076"], [5, 1, 1, 1, "#fff"], [7, 1, 1, 1, "#fff"], [10, 1, 1, 1, "#fff"], [11, 1, 1, 1, "#d6dade"], [13, 1, 1, 1, "#c9cdd4"], [14, 1, 1, 1, "#2b2f37"], [17, 1, 1, 1, "#fff"],
  [0, 2, 1, 1, "#9c9da0"], [2, 2, 4, 1, "#fff"], [7, 2, 1, 1, "#f2f2f4"], [10, 2, 1, 1, "#fff"], [12, 2, 1, 1, "#e6e8ea"], [13, 2, 1, 1, "#787b80"], [14, 2, 1, 1, "#fff"], [15, 2, 1, 1, "#94979c"],
  [0, 3, 1, 1, "#97989b"], [2, 3, 1, 1, "#a9aaad"], [4, 3, 3, 1, "#fff"], [7, 3, 1, 1, "#d6d7db"], [9, 3, 2, 1, "#fff"], [12, 3, 1, 1, "#fff"], [15, 3, 1, 1, "#fff"],
];
const BANK_CELLS = [
  [0, 1, 1, 1, "#555962"], [0, 5, 1, 1, "#8e9196"], [2, 0, 0.9, 7, "#fff"],
  [4, 0, 1, 1, "#4b4f57"], [5, 0, 1, 1, "#c9ccd2"], [6, 0, 1, 1, "#fff"], [4, 1, 1, 1, "#2b2f36"], [5, 1, 2, 1, "#fff"], [5, 2, 1, 1, "#6b6e75"], [6, 2, 1, 1, "#fff"],
  [4, 3, 1, 1, "#fff"], [5, 3, 1, 1, "#777a81"], [6, 3, 2, 1, "#e3e5ea"], [5, 4, 1, 1, "#c3c6cd"], [6, 4, 1, 1, "#4b4f57"], [4, 5, 1, 1, "#8e9196"], [6, 5, 1, 1, "#fff"], [4, 6, 1, 1, "#d6d9dd"], [5, 6, 1, 1, "#a0a3aa"], [6, 6, 1, 1, "#fff"],
  [8, 0, 1, 1, "#7d8087"], [8, 1, 1, 1, "#e3e5ea"], [8, 2, 1, 1, "#fff"], [8, 4, 2, 1, "#666a75"], [10, 2, 1, 1, "#fff"],
  [12, 0, 2, 1, "#9da0a6"], [12, 4, 2, 1, "#fff"], [13, 3, 1, 1, "#b9bcc2"], [11, 6, 4, 1, "#2b2f36"],
];

/* ---------- messages ---------- */

const LeftTail = () => (
  <svg viewBox="0 0 13 28" className="absolute bottom-0 -left-3 h-7 w-[13px] fill-[#222d38]" aria-hidden="true">
    <path d="M13 0H12C12 12 9 21 1 24.500Q-.5 26 .8 28H13Z" />
  </svg>
);

const Time = ({ children, className = "" }) => (
  <span className={"text-[24.500px] leading-[28px] whitespace-pre " + className}>{children}</span>
);

function Incoming({ text, grouped }) {
  return (
    <div
      className={
        "relative flex h-[67px] w-fit bg-[#222d38] pr-[23px] pl-6 " +
        (grouped ? "rounded-[33px] rounded-bl-[10px]" : "rounded-[33px] rounded-bl-none")
      }
    >
      {!grouped && <LeftTail />}
      <span className="pt-[13px] leading-10 whitespace-pre">{text}</span>
      <Time className="mt-8 ml-[15px] text-[#738291]">오후 6:06</Time>
    </div>
  );
}

function Outgoing({ text, bg, fill }) {
  return (
    <div className={"relative mr-6 flex h-[67px] w-fit shrink-0 self-end rounded-[33px] rounded-br-none pr-3.5 pl-[23px] text-[#fdf3fe] " + bg}>
      <svg viewBox="0 0 13 28" className={"absolute -right-3 bottom-0 h-7 w-[13px] " + fill} aria-hidden="true">
        <path d="M0 0H1C1 12 4 21 12 24.500Q13.500 26 12.200 28H0Z" />
      </svg>
      <span className="pt-[13px] text-[33.800px] leading-10 whitespace-pre">{text}</span>
      <span className="mt-8 ml-[18px] flex">
        <Time>오후 6:06</Time>
        <span className="pt-[3px]">
          <Checks />
        </span>
      </span>
    </div>
  );
}

const CHAT = [
  { in: "Add Done" },
  { out: "/addstock qqq", bg: "bg-[#a050aa]", fill: "fill-[#a050aa]" },
  { in: "Add Failed" },
  { out: "/showstocks", bg: "bg-[#974eac]", fill: "fill-[#974eac]" },
  { in: '[["QQQ"]]' },
  { out: "/removestock qqq", bg: "bg-[#8f4cb0]", fill: "fill-[#8f4cb0]" },
  { in: "Remove Done" },
  { out: "/addstock tqqq", bg: "bg-[#8849b3]", fill: "fill-[#8849b3]" },
  { in: "Add Done" },
  { out: "/addstock uvxy", bg: "bg-[#8348b8]", fill: "fill-[#8348b8]" },
  { in: "Add Done" },
  { out: "/fetchnow", bg: "bg-[#7e46bd]", fill: "fill-[#7e46bd]" },
];

const Row = ({ children }) => <div className="h-10 leading-10 whitespace-pre">{children}</div>;
const Mono = ({ children }) => <span className="font-['DejaVu_Sans_Mono'] text-[31.200px] leading-none">{children}</span>;
const Bold = ({ children }) => <span className="text-[33.600px] font-medium">{children}</span>;
const Ko = ({ children }) => <span className="tracking-[-1.700px]">{children}</span>;
const Dash = ({ n }) => <span className="tracking-[.6px]">{"—".repeat(n)}</span>;

function Report() {
  return (
    <div className="relative mt-[3px] h-[787px] w-[590px] rounded-[33px] rounded-tl-[10px] rounded-bl-none bg-[#222d38] pt-4 pl-6 text-[33.700px]">
      <LeftTail />
      <Row>Server Time: 2022-11-26 18:06:47</Row>
      <Row />
      <Row><Bold>Stock Info [2022-11-25]</Bold></Row>
      <Row><Mono>TQQQ</Mono> <Cold /> 22.26(-2.07%)</Row>
      <Row>{"  RSI 53.82 [30 "}<Dash n={4} /><Bolt /><Dash n={4} /> 70]</Row>
      <Row><Mono>UVXY</Mono> <Cracker /> 7.74 (+0.78%)</Row>
      <Row>{"  RSI 27.04 [30 "}<Bolt /><Dash n={8} /> 70]</Row>
      <Row />
      <Row><Bold>Fear And Greed [2022-11-25]</Bold></Row>
      <Row><Bold>63.6</Bold> [0 <Dash n={6} /><Bolt /><Dash n={4} /> 100]</Row>
      <Row><Mono>1D</Mono> Ago: 65.74<Mono>(-2.14)</Mono><Cold /></Row>
      <Row><Mono>1W</Mono> Ago: 61.23<Mono>(+2.37)</Mono><Cracker /></Row>
      <Row><Mono>1M</Mono> Ago: 52.63<Mono>(+10.97)</Mono><Cracker /></Row>
      <Row />
      <Row><Bold>USD Exchange Rate</Bold></Row>
      <Row>1,338.00<Ko>원</Ko> [7.00 <Ko>상승</Ko><Cracker /> ]</Row>
      <Row />
      <Row><Bold>Highest Deposit Rate</Bold></Row>
      <Row>
        <Mosaic cells={BANK_CELLS} w={15} h={7.5} className="mt-1 ml-1 inline-block h-[33px] w-[117px] align-top" />
        <Ko>저축은행</Ko>: 6.15%
      </Row>
      <Time className="absolute right-[23px] bottom-[7px] text-[#738291]">오후 6:07</Time>
    </div>
  );
}

/* ---------- bars ---------- */

function Header() {
  return (
    <header className="relative z-10 flex h-[133px] shrink-0 items-center bg-linear-to-r from-[#242d39] to-[#29303d] pr-[46px] pl-10 shadow-[0_1px_3px_rgba(0,0,0,.4)]">
      <svg viewBox="0 0 30 30" className="h-[30px] w-[30px] stroke-white stroke-[4.500]" strokeLinecap="round" aria-label="Close">
        <path d="M2.500 2.500L27.500 27.500M27.500 2.500L2.500 27.500" />
      </svg>
      <div className="ml-[61px] flex size-[88px] items-center justify-center rounded-full bg-linear-to-b from-[#5baffc] to-[#3f86c9] pt-0.5 text-[31px] font-medium text-white">
        F
      </div>
      <div className="ml-[25px] flex flex-col pt-[5px]">
        <Mosaic cells={NAME_CELLS} w={18} h={4} className="ml-[5px] h-8 w-[139px]" />
        <span className="mt-[7px] -mb-px text-[29px] leading-[36px] text-[#7c8896]">봇</span>
      </div>
      <svg viewBox="0 0 8 34" className="ml-auto h-[34px] w-2 fill-white" aria-label="Menu">
        <circle cx="4" cy="4" r="4" />
        <circle cx="4" cy="17" r="4" />
        <circle cx="4" cy="30" r="4" />
      </svg>
    </header>
  );
}

function Composer() {
  return (
    <footer className="relative z-10 flex h-[103px] shrink-0 items-center bg-[#212d3a] pt-0.5 pr-[25px] pl-[27px] text-[#75818f]">
      <span className="flex h-[46px] w-[54px] items-center justify-center rounded-[13px] border-[3.500px] border-[#6f7b89] font-['Liberation_Sans'] text-[23px] leading-none font-bold">GIF</span>
      <span className="mt-[7px] ml-5 h-[50px] w-[5px] bg-[#5b9fd8]" />
      <span className="mt-[5px] -ml-[3px] text-[35.500px] leading-10">메시지</span>
      <svg viewBox="1015 1336 126 146" className="ml-auto h-[48px] w-[42px] fill-none stroke-[#75818f] stroke-[10]" strokeLinecap="round" strokeLinejoin="round" aria-label="Attach">
        <path d="M1025 1397L1066 1355C1104 1322 1156 1368 1124 1410L1072 1463C1043 1492 1002 1452 1030 1424L1080 1376C1098 1361 1116 1379 1102 1396L1055 1443" />
      </svg>
      <svg viewBox="0 0 50 50" className="ml-[54px] size-[50px] fill-none stroke-[#75818f] stroke-[3.500]" aria-label="Camera">
        <rect x="2" y="2" width="46" height="46" rx="13" />
        <circle cx="25" cy="25" r="10.500" />
      </svg>
    </footer>
  );
}

function SideStrip() {
  return (
    <aside className="relative z-10 flex h-full w-2 shrink-0 border-r-[3px] border-[#1e3042] bg-[#1d2834]">
      <div className="flex w-[5px] flex-col">
        <div className="h-[133px] bg-[#262f3b]" />
        <div className="h-[149px] bg-[#29343b]" />
        <div className="mt-[150px] h-0.5 bg-[#121b23]" />
        <div className="mt-[149px] h-0.5 bg-[#121b23]" />
        <div className="mt-[149px] h-0.5 bg-[#121b23]" />
      </div>
    </aside>
  );
}

export default function App() {
  return (
    <div className="relative flex h-[2120px] w-[1109px] overflow-hidden bg-[radial-gradient(ellipse_at_0%_85%,#162632_0%,transparent_60%),radial-gradient(ellipse_at_100%_88%,#0c1217_0%,transparent_45%),linear-gradient(to_right,#0f171e,#131a28_55%,#131a28)] font-[Roboto,'Noto_Sans_CJK_KR',sans-serif] text-[34px] text-white">
      <Wallpaper />
      <SideStrip />
      <div className="relative flex min-w-0 grow flex-col">
        <Header />
        <main className="flex grow flex-col pl-[21px]">
          <div className="flex h-3 flex-col justify-end overflow-hidden">
            <Outgoing text="/addstock qqq" bg="bg-[#a54fa9]" fill="fill-[#a54fa9]" />
          </div>
          <div className="mt-[15px] flex flex-col gap-[15px]">
            {CHAT.map((m, i) => (m.in ? <Incoming key={i} text={m.in} /> : <Outgoing key={i} text={m.out} bg={m.bg} fill={m.fill} />))}
            <Incoming text="Fetching finance info.." grouped />
          </div>
          <Report />
        </main>
        <Composer />
      </div>
    </div>
  );
}
